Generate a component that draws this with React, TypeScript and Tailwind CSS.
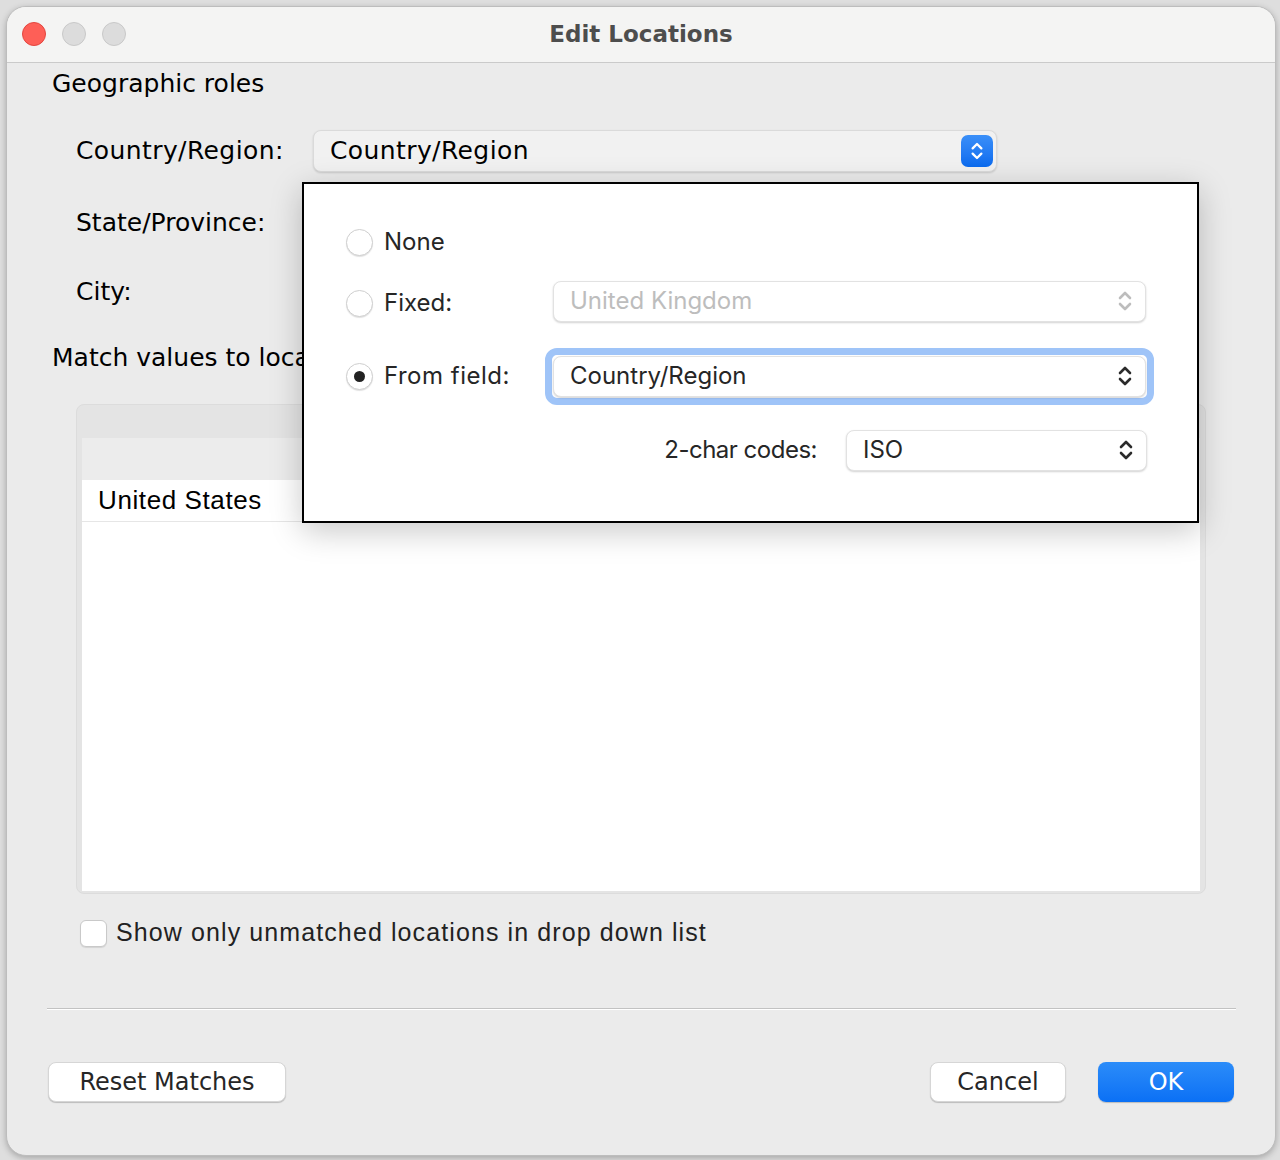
import React from 'react';

const lucida = { fontFamily: '"DejaVu Sans", "Liberation Sans", sans-serif' };
const sf = { fontFamily: 'Inter, "Liberation Sans", sans-serif' };
const helv = { fontFamily: '"Liberation Sans", Arial, sans-serif' };

function Chevrons({ color = '#2b2b2b', className = '' }: { color?: string; className?: string }) {
  return (
    <svg viewBox="0 0 16 26" className={className} fill="none">
      <path d="M3 10 L8 5 L13 10 M3 16 L8 21 L13 16" stroke={color} strokeWidth="2.6" strokeLinecap="round" strokeLinejoin="round" />
    </svg>
  );
}

function Radio({ checked }: { checked?: boolean }) {
  return (
    <div className="w-[27px] h-[27px] rounded-full bg-white border border-[#cfcfcf] shadow-[0_1px_1px_rgba(0,0,0,0.12)] flex items-center justify-center">
      {checked && <div className="w-[11px] h-[11px] rounded-full bg-[#222]" />}
    </div>
  );
}

function PopSelect({ value, disabled, width }: { value: string; disabled?: boolean; width: string }) {
  return (
    <div
      className={`${width} h-[41px] rounded-[8px] bg-white border border-[#e2e2e2] shadow-[0_1px_2px_rgba(0,0,0,0.18)] flex items-center justify-between pl-[16px] pr-[12px]`}
    >
      <span className={`text-[24px] ${disabled ? 'text-[#bdbdbd]' : 'text-[#262626]'}`} style={sf}>
        {value}
      </span>
      <Chevrons color={disabled ? '#bdbdbd' : '#2b2b2b'} className="w-[16px] h-[26px]" />
    </div>
  );
}

export default function App() {
  return (
    <div className="relative w-[1280px] h-[1160px] bg-[#dedede] overflow-hidden">
      <div className="absolute left-[6px] top-[6px] w-[1270px] h-[1150px] rounded-[20px] bg-[#ebebeb] border border-[#bdbdbd] shadow-[0_2px_6px_rgba(0,0,0,0.25)] overflow-hidden flex flex-col">
        {/* title bar */}
        <div className="relative h-[56px] shrink-0 bg-[#f4f4f3] border-b border-[#cacaca] flex items-center justify-center">
          <div className="absolute left-[15px] top-[15px] flex gap-[16px]">
            <div className="w-[24px] h-[24px] rounded-full bg-[#fe5f57] border border-[#e2463f]" />
            <div className="w-[24px] h-[24px] rounded-full bg-[#dcdcdc] border border-[#c8c8c8]" />
            <div className="w-[24px] h-[24px] rounded-full bg-[#dcdcdc] border border-[#c8c8c8]" />
          </div>
          <span className="text-[23px] font-bold text-[#4d4d4d]" style={lucida}>
            Edit Locations
          </span>
        </div>

        <div className="flex flex-col text-black" style={lucida}>
          <div className="h-[42px] pl-[45px] flex items-center text-[25px]">Geographic roles</div>

          <div className="mt-[24px] h-[44px] flex items-center">
            <div className="w-[306px] pl-[69px] text-[25px] tracking-[0.4px]">Country/Region:</div>
            <div className="w-[684px] h-[42px] rounded-[8px] bg-[#f1f1f1] border border-[#dadada] shadow-[0_1px_2px_rgba(0,0,0,0.15)] flex items-center justify-between pl-[16px] pr-[3px]">
              <span className="text-[25px] tracking-[0.4px]">Country/Region</span>
              <div className="w-[32px] h-[32px] rounded-[7px] bg-gradient-to-b from-[#3a8ff8] to-[#0a6bef] flex items-center justify-center">
                <Chevrons color="#ffffff" className="w-[14px] h-[24px]" />
              </div>
            </div>
          </div>

          <div className="mt-[28px] h-[44px] flex items-center pl-[69px] text-[25px]">State/Province:</div>
          <div className="mt-[25px] h-[44px] flex items-center pl-[69px] text-[25px]">City:</div>
          <div className="mt-[24px] h-[40px] flex items-center pl-[45px] text-[25px]">Match values to locations</div>

          {/* table */}
          <div className="mt-[26px] ml-[69px] w-[1130px] h-[490px] rounded-[8px] bg-[#e4e4e4] border border-[#dcdcdc] flex flex-col px-[5px] pb-[2px]">
            <div className="h-[33px] shrink-0" />
            <div className="h-[42px] shrink-0 bg-[#ececec]" />
            <div className="flex-1 bg-white flex flex-col">
              <div className="h-[42px] border-b border-[#e6e6e6] flex items-center pl-[16px] text-[26px] tracking-[0.6px]" style={helv}>
                United States
              </div>
            </div>
          </div>

          {/* checkbox */}
          <div className="mt-[19px] h-[40px] ml-[73px] flex items-center gap-[9px]">
            <div className="w-[27px] h-[27px] rounded-[6px] bg-white border border-[#c9c9c9] shadow-[0_1px_1px_rgba(0,0,0,0.1)]" />
            <span className="text-[25px] text-[#222] tracking-[1.1px]" style={helv}>
              Show only unmatched locations in drop down list
            </span>
          </div>

          <div className="mt-[55px] ml-[40px] w-[1189px] h-[2px] border-t border-[#c2c2c2] bg-white" />

          {/* buttons */}
          <div className="mt-[52px] px-[41px] flex items-center justify-between">
            <button className="w-[238px] h-[40px] rounded-[8px] bg-white border border-[#d6d6d6] shadow-[0_1px_1px_rgba(0,0,0,0.2)] text-[24px] text-[#262626]" style={lucida}>
              Reset Matches
            </button>
            <div className="flex gap-[32px]">
              <button className="w-[136px] h-[40px] rounded-[8px] bg-white border border-[#d6d6d6] shadow-[0_1px_1px_rgba(0,0,0,0.2)] text-[24px] text-[#262626]" style={lucida}>
                Cancel
              </button>
              <button className="w-[136px] h-[40px] rounded-[8px] bg-gradient-to-b from-[#2b8cf9] to-[#0a70f5] shadow-[0_1px_1px_rgba(0,0,0,0.2)] text-[24px] text-white" style={lucida}>
                OK
              </button>
            </div>
          </div>
        </div>
      </div>

      {/* popover */}
      <div className="absolute left-[302px] top-[182px] w-[897px] h-[341px] bg-white border-2 border-black shadow-[0_8px_30px_rgba(0,0,0,0.22)]" style={sf}>
        <div className="absolute left-[42px] top-[43px] h-[30px] flex items-center gap-[11px]">
          <Radio />
          <span className="text-[24px] text-[#262626]">None</span>
        </div>
        <div className="absolute left-[42px] top-[96px] h-[42px] flex items-center">
          <div className="w-[207px] flex items-center gap-[11px] pt-[4px]">
            <Radio />
            <span className="text-[24px] text-[#262626]">Fixed:</span>
          </div>
          <PopSelect value="United Kingdom" disabled width="w-[593px]" />
        </div>
        <div className="absolute left-[42px] top-[162px] h-[60px] flex items-center">
          <div className="w-[199px] flex items-center gap-[11px]">
            <Radio checked />
            <span className="text-[24px] text-[#262626] tracking-[0.5px]">From field:</span>
          </div>
          <div className="rounded-[12px] border-[7px] border-[#9fc4f8] p-[1px]">
            <PopSelect value="Country/Region" width="w-[593px]" />
          </div>
        </div>
        <div className="absolute right-[50px] top-[245px] h-[42px] flex items-center">
          <span className="text-[24px] text-[#262626] mr-[29px] tracking-[-0.5px]">2-char codes:</span>
          <PopSelect value="ISO" width="w-[301px]" />
        </div>
      </div>
    </div>
  );
}
